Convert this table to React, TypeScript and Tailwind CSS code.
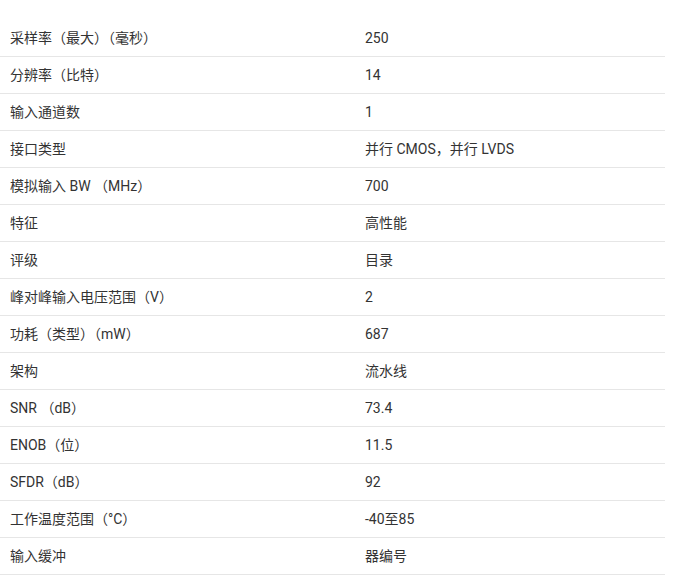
import React from 'react';

const rows: [string, string][] = [
  ['采样率（最大）（毫秒）', '250'],
  ['分辨率（比特）', '14'],
  ['输入通道数', '1'],
  ['接口类型', '并行 CMOS，并行 LVDS'],
  ['模拟输入 BW （MHz）', '700'],
  ['特征', '高性能'],
  ['评级', '目录'],
  ['峰对峰输入电压范围（V）', '2'],
  ['功耗（类型）（mW）', '687'],
  ['架构', '流水线'],
  ['SNR （dB）', '73.4'],
  ['ENOB（位）', '11.5'],
  ['SFDR（dB）', '92'],
  ['工作温度范围（°C）', '-40至85'],
  ['输入缓冲', '器编号'],
];

export default function App() {
  return (
    <div
      className="w-[682px] h-[576px] bg-white pt-[20px] overflow-hidden text-[14px] text-[#333]"
      style={{ fontFamily: 'Roboto, "Noto Sans CJK SC", sans-serif' }}
    >
      <div className="w-[665px]">
        {rows.map(([k, v], i) => (
          <div key={i} className="flex items-center h-[37px] border-b border-[#e6e6e6]">
            <div className="w-[355px] pl-[10px]">{k}</div>
            <div className="flex-1 pl-[10px]">{v}</div>
          </div>
        ))}
      </div>
    </div>
  );
}
